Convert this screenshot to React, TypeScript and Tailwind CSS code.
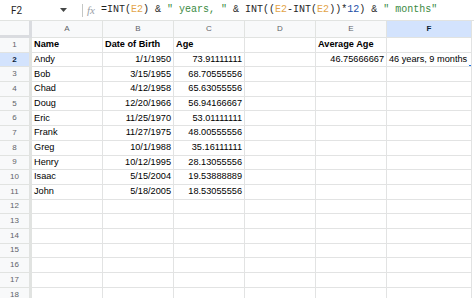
import React from 'react';

const cols = [
  { key: 'A', w: 'w-[71px]' },
  { key: 'B', w: 'w-[71px]' },
  { key: 'C', w: 'w-[71px]' },
  { key: 'D', w: 'w-[71px]' },
  { key: 'E', w: 'w-[71px]' },
  { key: 'F', w: 'w-[85px]' },
];

type Cell = { text: string; right?: boolean; bold?: boolean };

const data: Record<number, Cell[]> = {
  1: [
    { text: 'Name', bold: true },
    { text: 'Date of Birth', bold: true },
    { text: 'Age', bold: true },
    { text: '' },
    { text: 'Average Age', bold: true },
    { text: '' },
  ],
};

const people = [
  ['Andy', '1/1/1950', '73.91111111'],
  ['Bob', '3/15/1955', '68.70555556'],
  ['Chad', '4/12/1958', '65.63055556'],
  ['Doug', '12/20/1966', '56.94166667'],
  ['Eric', '11/25/1970', '53.01111111'],
  ['Frank', '11/27/1975', '48.00555556'],
  ['Greg', '10/1/1988', '35.16111111'],
  ['Henry', '10/12/1995', '28.13055556'],
  ['Isaac', '5/15/2004', '19.53888889'],
  ['John', '5/18/2005', '18.53055556'],
];

people.forEach((p, i) => {
  data[i + 2] = [
    { text: p[0] },
    { text: p[1], right: true },
    { text: p[2], right: true },
    { text: '' },
    { text: i === 0 ? '46.75666667' : '', right: true },
    { text: i === 0 ? '46 years, 9 months' : '' },
  ];
});

const rows = Array.from({ length: 18 }, (_, i) => i + 1);

function FormulaBar() {
  return (
    <div className="flex h-[21px] items-center border-b border-[#e1e3e1] bg-white">
      <div className="flex w-[72px] items-center pl-[11px] text-[10px] text-[#1f1f1f]" style={{ fontFamily: 'Roboto, "Liberation Sans", sans-serif' }}>
        <span className="flex-1">F2</span>
        <svg width="7" height="4" viewBox="0 0 7 4" className="mr-[5px]">
          <path d="M0 0 L7 0 L3.5 4 Z" fill="#444746" />
        </svg>
      </div>
      <div className="ml-[10px] h-[13px] w-px bg-[#c4c7c5]" />
      <span className="ml-[4px] w-[14px] font-['Liberation_Serif',serif] text-[11px] italic text-[#9aa0a6]">fx</span>
      <div className="whitespace-pre font-['Liberation_Mono',monospace] text-[10px] leading-none text-[#1f1f1f]">
        <span>=INT(</span>
        <span className="text-[#e3a44a]">E2</span>
        <span>) &amp; </span>
        <span className="text-[#3b8a3f]">" years, "</span>
        <span> &amp; INT((</span>
        <span className="text-[#e3a44a]">E2</span>
        <span>-INT(</span>
        <span className="text-[#e3a44a]">E2</span>
        <span>))*</span>
        <span className="text-[#1c4fa8]">12</span>
        <span>) &amp; </span>
        <span className="text-[#3b8a3f]">" months"</span>
      </div>
    </div>
  );
}

export default function App() {
  return (
    <div className="h-[298px] w-[474px] overflow-hidden bg-white font-['Liberation_Sans',Arial,sans-serif]">
      <FormulaBar />

      {/* column header */}
      <div className="flex h-[17px]">
        <div className="w-[32px] shrink-0 border-b-[3px] border-r-[3px] border-[#dadce0] bg-[#f8f9fa]" />
        {cols.map((c) => (
          <div
            key={c.key}
            className={`${c.w} flex shrink-0 items-center justify-center border-b border-r border-[#e1e3e1] text-[8px] ${
              c.key === 'F' ? 'bg-[#d3e3fd] font-bold text-[#0b1f3a]' : 'bg-[#f8f9fa] text-[#5f6368]'
            }`}
          >
            {c.key}
          </div>
        ))}
      </div>

      {rows.map((r) => {
        const cells = data[r] ?? cols.map(() => ({ text: '' }));
        return (
          <div key={r} className="flex h-[14.7px]">
            <div
              className={`flex w-[32px] shrink-0 items-center justify-center border-b border-r-[3px] border-[#e1e3e1] text-[8px] ${
                r === 2 ? 'bg-[#d3e3fd] font-bold text-[#0b1f3a]' : 'bg-[#f8f9fa] text-[#5f6368]'
              }`}
            >
              {r}
            </div>
            {cells.map((cell, ci) => {
              const selected = r === 2 && ci === 5;
              return (
                <div
                  key={ci}
                  className={`${cols[ci].w} relative flex shrink-0 items-center overflow-hidden whitespace-nowrap border-b border-r border-[#e2e3e3] px-[2px] text-[9.2px] leading-none text-black ${
                    cell.right ? 'justify-end' : 'justify-start'
                  } ${cell.bold ? 'font-bold' : ''}`}
                >
                  {cell.text}
                  {selected && (
                    <>
                      <div className="absolute inset-[-1px] border-[1.5px] border-[#1a73e8]" />
                      <div className="absolute bottom-[-3px] right-[-2px] h-[5px] w-[5px] rounded-[1px] border border-white bg-[#1a73e8]" />
                    </>
                  )}
                </div>
              );
            })}
          </div>
        );
      })}
    </div>
  );
}
